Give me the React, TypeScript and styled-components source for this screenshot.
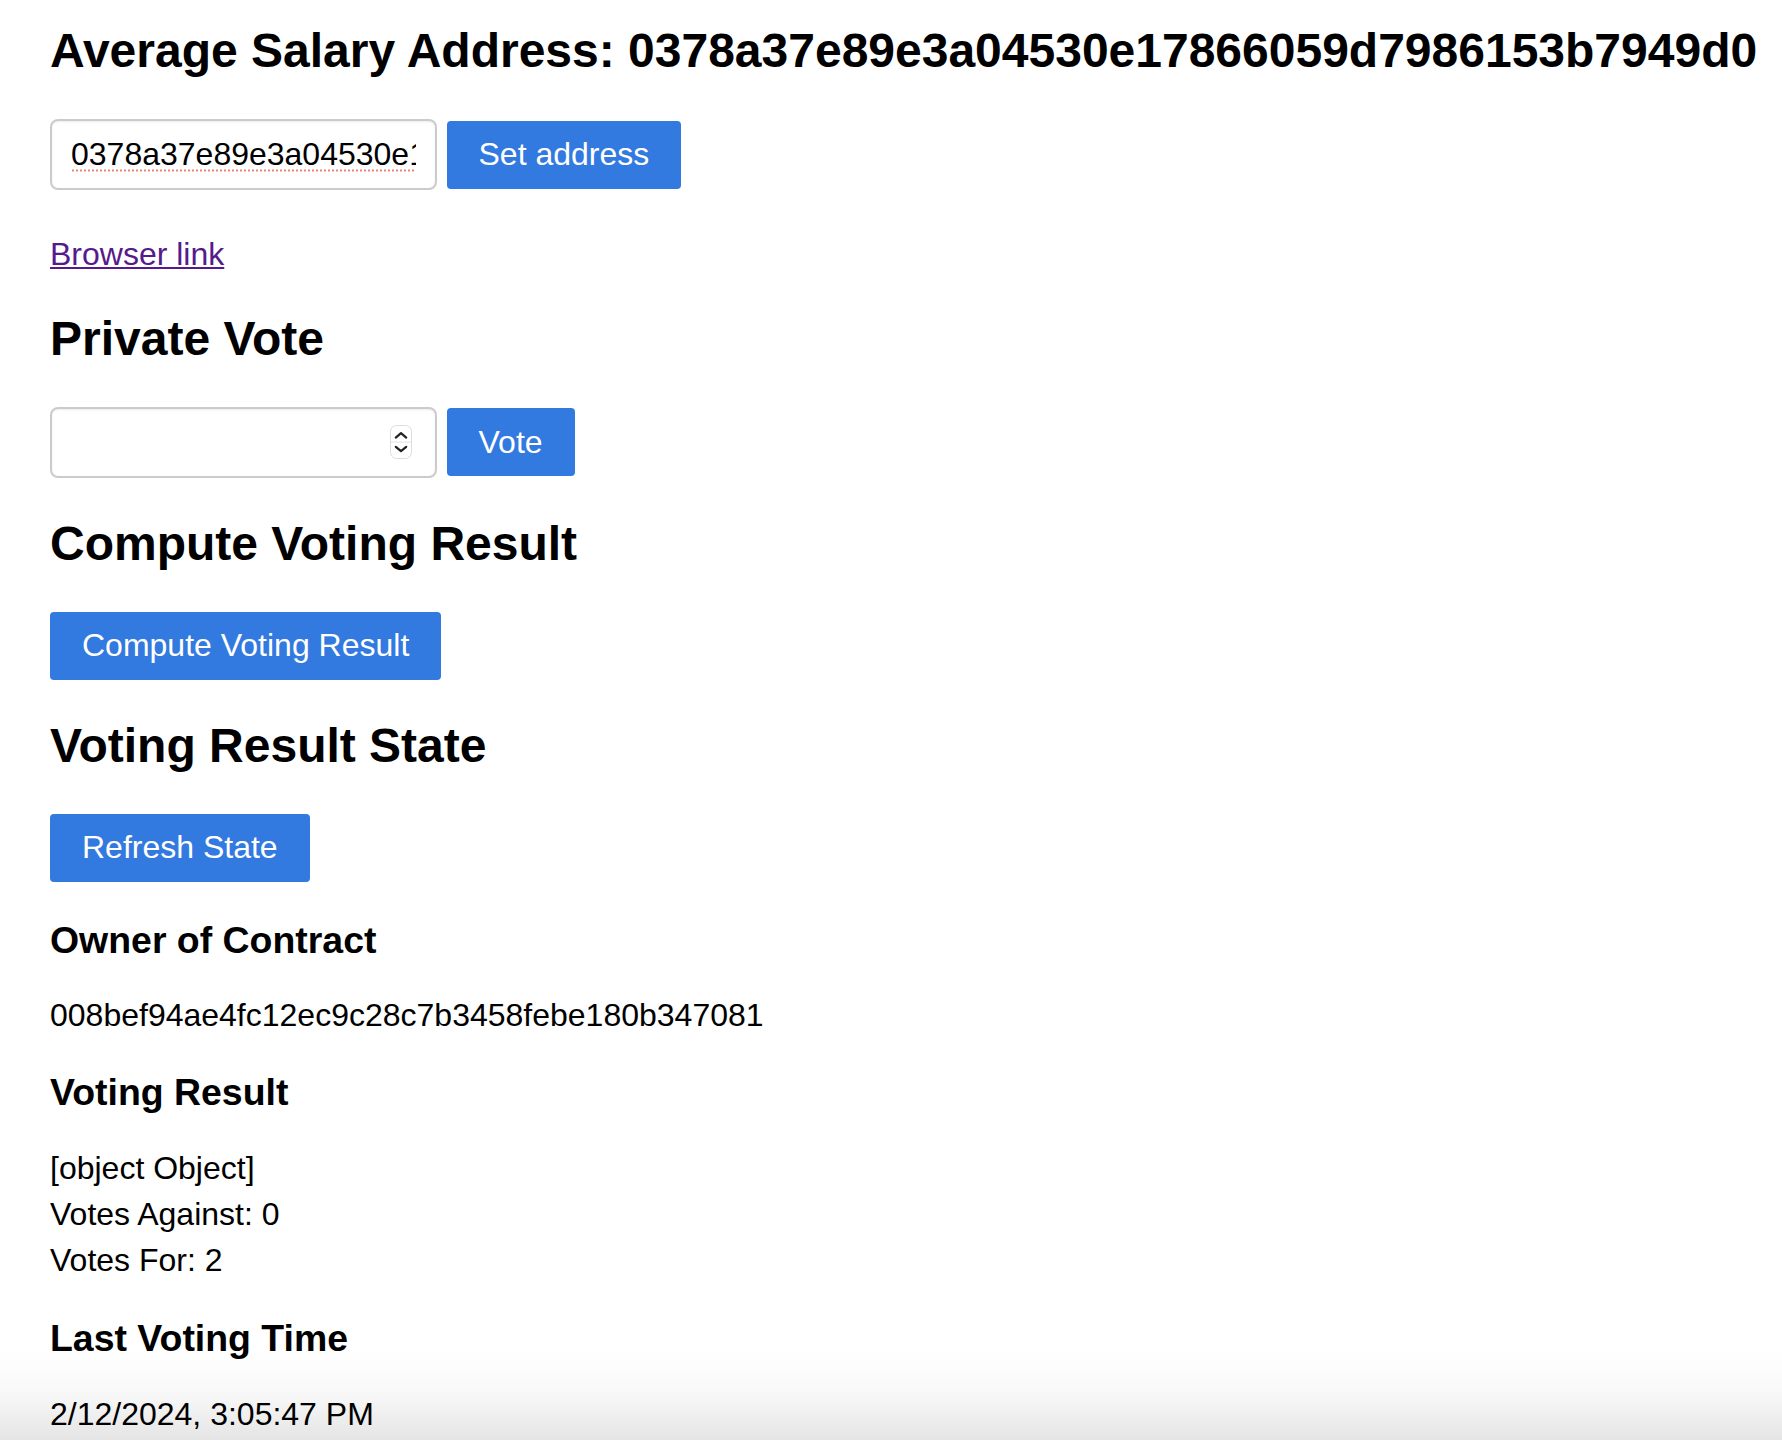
import React from "react";
import styled, { createGlobalStyle } from "styled-components";

const GlobalStyle = createGlobalStyle`
  html, body {
    margin: 0;
    padding: 0;
    background: #ffffff;
  }
  body {
    font-family: "Liberation Sans", Arial, Helvetica, sans-serif;
    color: #000000;
  }
`;

const Page = styled.main`
  display: flex;
  flex-direction: column;
  align-items: flex-start;
  padding: 23px 0 0 50px;
`;

const Title = styled.h2<{ $first?: boolean }>`
  margin: ${(p) => (p.$first ? "0" : "38px")} 0 0;
  font-size: 48px;
  line-height: 55px;
  font-weight: 700;
  white-space: nowrap;
`;

const SubTitle = styled.h3<{ $gap?: number }>`
  margin: ${(p) => p.$gap ?? 37}px 0 0;
  font-size: 37.44px;
  line-height: 43px;
  font-weight: 700;
`;

const Controls = styled.div`
  display: flex;
  align-items: center;
  gap: 9.5px;
  margin-top: 41px;
`;

const fieldLook = `
  box-sizing: border-box;
  width: 387px;
  height: 71px;
  border: 2px solid #cbcbcb;
  border-radius: 8px;
  box-shadow: inset 0 1px 2px rgba(0, 0, 0, 0.08);
  font-family: "Liberation Sans", Arial, Helvetica, sans-serif;
  font-size: 32px;
  color: #000;
`;

const AddressField = styled.input`
  ${fieldLook}
  padding: 0 19px;
  outline: none;
  background:
    radial-gradient(circle at 2px 1.5px, #ef7f72 0.9px, rgba(239, 127, 114, 0) 1.3px)
      0 48px / 4px 3px repeat-x content-box content-box,
    #ffffff;
`;

const NumberBox = styled.label`
  ${fieldLook}
  display: flex;
  align-items: center;
  padding: 0 23.5px 0 19px;
  background: #ffffff;
`;

const NumberInput = styled.input`
  flex: 1;
  min-width: 0;
  border: none;
  outline: none;
  background: transparent;
  font: inherit;
  color: inherit;
  padding: 0;
  appearance: textfield;
  -moz-appearance: textfield;
  &::-webkit-inner-spin-button,
  &::-webkit-outer-spin-button {
    -webkit-appearance: none;
    margin: 0;
  }
`;

const Stepper = styled.svg`
  flex: none;
  display: block;
`;

const Button = styled.button`
  box-sizing: border-box;
  height: 68px;
  padding: 0 32px;
  border: none;
  border-radius: 4px;
  background: #3279e0;
  color: #ffffff;
  font-family: "Liberation Sans", Arial, Helvetica, sans-serif;
  font-size: 32px;
  line-height: 37px;
  cursor: pointer;
  white-space: nowrap;
`;

const BrowserLink = styled.a`
  margin-top: 45.5px;
  font-size: 32px;
  line-height: 37px;
  color: #551a8b;
  text-decoration: underline;
  text-decoration-thickness: 2px;
  text-underline-offset: 2px;
`;

const Value = styled.p<{ $gap?: number }>`
  margin: ${(p) => p.$gap ?? 35}px 0 0;
  font-size: 32px;
  line-height: 37px;
`;

const Lines = styled.div`
  margin-top: 31px;
  font-size: 32px;
`;

const Line = styled.div`
  line-height: 46px;
`;

const BottomFade = styled.div`
  position: fixed;
  left: 0;
  right: 0;
  bottom: 0;
  height: 90px;
  pointer-events: none;
  background: linear-gradient(
    to bottom,
    rgba(0, 0, 0, 0) 0%,
    rgba(0, 0, 0, 0.025) 45%,
    rgba(0, 0, 0, 0.1) 100%
  );
`;

const ADDRESS = "0378a37e89e3a04530e17866059d7986153b7949d0";

function SpinIcon() {
  return (
    <Stepper width="22" height="34" viewBox="0 0 22 34" aria-hidden="true">
      <rect x="0.5" y="0.5" width="21" height="33" rx="6" fill="#ffffff" stroke="#dcdcdc" />
      <line x1="1" y1="17" x2="21" y2="17" stroke="#e2e2e2" strokeWidth="1" />
      <polyline
        points="5.8,12.6 11,8.2 16.2,12.6"
        fill="none"
        stroke="#222222"
        strokeWidth="2.2"
        strokeLinecap="round"
        strokeLinejoin="round"
      />
      <polyline
        points="5.8,21.8 11,26.2 16.2,21.8"
        fill="none"
        stroke="#222222"
        strokeWidth="2.2"
        strokeLinecap="round"
        strokeLinejoin="round"
      />
    </Stepper>
  );
}

export default function App() {
  return (
    <>
      <GlobalStyle />
      <Page>
        <Title $first>Average Salary Address: {ADDRESS}</Title>
        <Controls>
          <AddressField type="text" defaultValue={ADDRESS} spellCheck={false} />
          <Button type="button">Set address</Button>
        </Controls>
        <BrowserLink href="#">Browser link</BrowserLink>

        <Title>Private Vote</Title>
        <Controls>
          <NumberBox>
            <NumberInput type="number" />
            <SpinIcon />
          </NumberBox>
          <Button type="button">Vote</Button>
        </Controls>

        <Title>Compute Voting Result</Title>
        <Controls>
          <Button type="button">Compute Voting Result</Button>
        </Controls>

        <Title>Voting Result State</Title>
        <Controls>
          <Button type="button">Refresh State</Button>
        </Controls>

        <SubTitle $gap={37.5}>Owner of Contract</SubTitle>
        <Value>008bef94ae4fc12ec9c28c7b3458febe180b347081</Value>

        <SubTitle>Voting Result</SubTitle>
        <Lines>
          <Line>[object Object]</Line>
          <Line>Votes Against: 0</Line>
          <Line>Votes For: 2</Line>
        </Lines>

        <SubTitle $gap={34}>Last Voting Time</SubTitle>
        <Value $gap={36}>2/12/2024, 3:05:47 PM</Value>
      </Page>
      <BottomFade />
    </>
  );
}
